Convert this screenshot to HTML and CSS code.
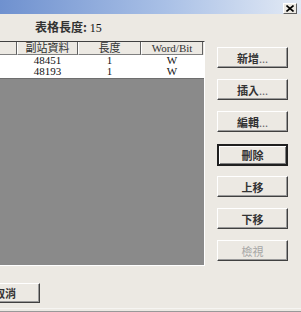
FILE: index.html
```html
<!DOCTYPE html>
<html lang="zh-Hant">
<head>
  <meta charset="UTF-8" />
  <title>表格</title>
  <link rel="stylesheet" href="styles.css">
</head>
<body>
  <div class="titlebar">
    <div class="close">
      <svg width="8" height="7" viewBox="0 0 8 7"><path d="M0.5 0.5 L7.5 6.5 M7.5 0.5 L0.5 6.5" stroke="#000" stroke-width="1.6"/></svg>
    </div>
  </div>

  <div class="main">
    <div class="left">
      <div class="length">表格長度:&nbsp;<span class="num">15</span></div>
      <div class="list">
        <div class="row head">
          <div class="cell"></div>
          <div class="cell">副站資料</div>
          <div class="cell">長度</div>
          <div class="cell">Word/Bit</div>
        </div>
        <div class="row">
          <div class="cell"></div>
          <div class="cell">48451</div>
          <div class="cell">1</div>
          <div class="cell">W</div>
        </div>
        <div class="row">
          <div class="cell"></div>
          <div class="cell">48193</div>
          <div class="cell">1</div>
          <div class="cell">W</div>
        </div>
        <div class="empty"></div>
      </div>
    </div>

    <div class="side">
      <button class="btn">新增<span class="dots">...</span></button>
      <button class="btn">插入<span class="dots">...</span></button>
      <button class="btn">編輯<span class="dots">...</span></button>
      <button class="btn default">刪除</button>
      <button class="btn">上移</button>
      <button class="btn">下移</button>
      <button class="btn" disabled>檢視</button>
    </div>
  </div>

  <div class="footer">
    <button class="btn cancel">取消</button>
  </div>
  <div class="bottom"></div>
</body>
</html>
```

FILE: styles.css
```css
body {
  margin: 0;
  width: 301px;
  height: 312px;
  overflow: hidden;
  background-color: #ece9e3;
  font-family: "Noto Sans CJK TC", "Liberation Serif", serif;
  display: flex;
  flex-direction: column;
}

.titlebar {
  height: 15px;
  background: linear-gradient(to right, #6f91cf, #a9c0e6 55%, #e3eaf5);
  display: flex;
  justify-content: flex-end;
  align-items: flex-start;
  padding: 3px 4px 0 0;
  box-sizing: border-box;
}

.close {
  width: 14px;
  height: 11px;
  background: #ece9e3;
  box-sizing: border-box;
  border: 1px solid;
  border-color: #fff #606060 #606060 #fff;
  display: flex;
  align-items: center;
  justify-content: center;
}

.main {
  display: flex;
}

.left {
  width: 205px;
  flex-shrink: 0;
  padding-top: 6px;
}

.length {
  height: 14px;
  line-height: 14px;
  margin-left: 35px;
  font-size: 12px;
  font-weight: bold;
  color: #333;
}

.length .num {
  font-family: "Liberation Serif", serif;
  font-weight: normal;
  color: #111;
}

.list {
  margin: 7px 0 0 -44px;
  width: 249px;
  height: 225px;
  box-sizing: border-box;
  border: 1px solid;
  border-color: #404040 #fff #fff #404040;
  display: flex;
  flex-direction: column;
  background: #fff;
}

.row {
  display: grid;
  grid-template-columns: 60px 61px 63px 62px;
  height: 11px;
  line-height: 11px;
  font-family: "Liberation Serif", "Noto Sans CJK TC", serif;
  font-size: 11px;
  color: #111;
}

.row.head {
  height: 13px;
  line-height: 12px;
  background: #ece9e3;
  color: #333;
}

.cell {
  text-align: center;
  overflow: hidden;
  white-space: nowrap;
}

.head .cell {
  box-sizing: border-box;
  border-left: 1px solid #fff;
  border-right: 1px solid #606060;
  border-bottom: 1px solid #808080;
}

.empty {
  flex: 1;
  margin-top: 1px;
  background: #8a8a8a;
  border-top: 1px solid #6e6e6e;
}

.side {
  display: flex;
  flex-direction: column;
  gap: 11px;
  padding-top: 33px;
  margin-left: 12px;
}

.btn {
  width: 71px;
  height: 21px;
  padding: 0;
  background: #ece9e3;
  border: 1px solid;
  border-color: #fff #404040 #404040 #fff;
  box-shadow: inset -1px -1px 0 #9a9a9a;
  font-family: "Noto Sans CJK TC", sans-serif;
  font-size: 11px;
  font-weight: bold;
  color: #333;
}

.btn .dots {
  font-weight: normal;
  color: #666;
}

.btn.default {
  height: 22px;
  border: 2px solid #202020;
  box-shadow: inset 1px 1px 0 #fff, inset -1px -1px 0 #808080;
  margin-top: 1px;
  margin-bottom: -1px;
}

.btn:disabled {
  color: #a6a6a6;
  font-weight: normal;
}

.footer {
  padding-top: 13px;
  margin-left: -30px;
}

.cancel {
  width: 70px;
  height: 20px;
}

.bottom {
  margin-top: 5px;
  height: 6px;
  border-top: 1px solid #f6f5f2;
  border-bottom: 1px solid #999;
}
```
